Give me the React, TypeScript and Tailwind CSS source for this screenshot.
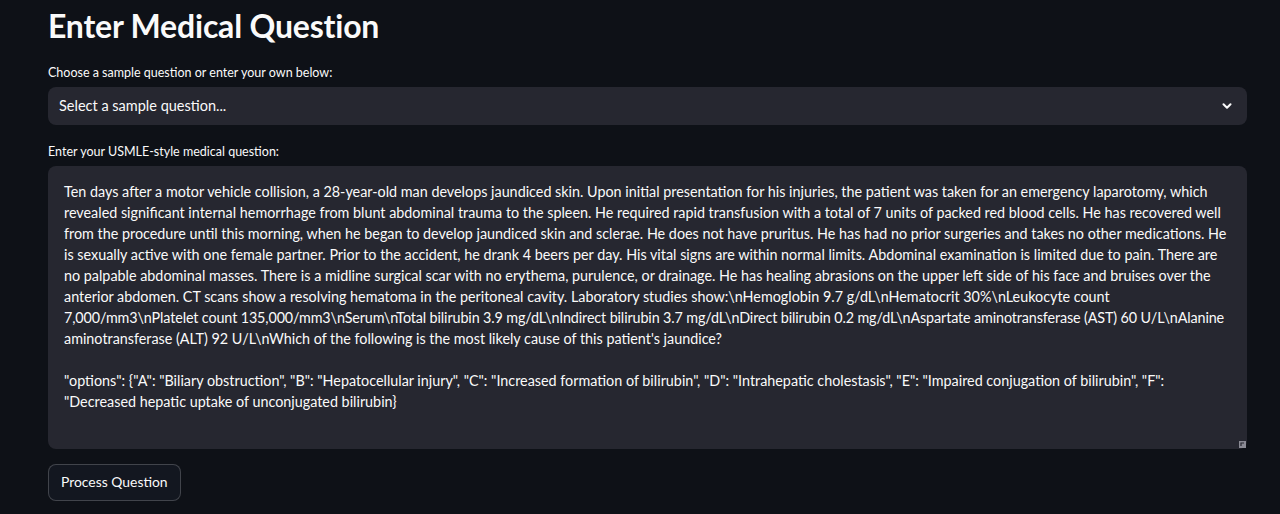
import React from "react";

const lines = [
  "Ten days after a motor vehicle collision, a 28-year-old man develops jaundiced skin. Upon initial presentation for his injuries, the patient was taken for an emergency laparotomy, which",
  "revealed significant internal hemorrhage from blunt abdominal trauma to the spleen. He required rapid transfusion with a total of 7 units of packed red blood cells. He has recovered well",
  "from the procedure until this morning, when he began to develop jaundiced skin and sclerae. He does not have pruritus. He has had no prior surgeries and takes no other medications. He",
  "is sexually active with one female partner. Prior to the accident, he drank 4 beers per day. His vital signs are within normal limits. Abdominal examination is limited due to pain. There are",
  "no palpable abdominal masses. There is a midline surgical scar with no erythema, purulence, or drainage. He has healing abrasions on the upper left side of his face and bruises over the",
  "anterior abdomen. CT scans show a resolving hematoma in the peritoneal cavity. Laboratory studies show:\\nHemoglobin 9.7 g/dL\\nHematocrit 30%\\nLeukocyte count",
  "7,000/mm3\\nPlatelet count 135,000/mm3\\nSerum\\nTotal bilirubin 3.9 mg/dL\\nIndirect bilirubin 3.7 mg/dL\\nDirect bilirubin 0.2 mg/dL\\nAspartate aminotransferase (AST) 60 U/L\\nAlanine",
  "aminotransferase (ALT) 92 U/L\\nWhich of the following is the most likely cause of this patient's jaundice?",
  "",
  "\"options\": {\"A\": \"Biliary obstruction\", \"B\": \"Hepatocellular injury\", \"C\": \"Increased formation of bilirubin\", \"D\": \"Intrahepatic cholestasis\", \"E\": \"Impaired conjugation of bilirubin\", \"F\":",
  "\"Decreased hepatic uptake of unconjugated bilirubin}",
];

export default function App() {
  return (
    <div
      className="w-[1280px] h-[514px] overflow-hidden bg-[#0e1117] text-[#fafafa]"
      style={{ fontFamily: "Lato, 'Liberation Sans', sans-serif" }}
    >
      <div className="pl-12 pr-[33px] pt-[4px]">
        <h1 className="text-[32px] font-bold leading-[44px] tracking-[-0.2px]">Enter Medical Question</h1>
        <div className="mt-[16px] text-[12.5px] leading-[18px]">Choose a sample question or enter your own below:</div>
        <div className="mt-[5px] h-[38px] rounded-lg bg-[#262730] flex items-center justify-between pl-[11px] pr-[13px]">
          <span className="text-[14.5px]">Select a sample question...</span>
          <svg width="14" height="14" viewBox="0 0 24 24" fill="none" stroke="#fafafa" strokeWidth="3.5" strokeLinecap="round" strokeLinejoin="round">
            <path d="M6 9l6 6 6-6" />
          </svg>
        </div>
        <div className="mt-[18px] text-[12.5px] leading-[18px]">Enter your USMLE-style medical question:</div>
        <div className="relative mt-[5px] h-[283px] rounded-lg bg-[#262730] pl-4 pr-4 pt-[15px]">
          {lines.map((l, i) => (
            <div
              key={i}
              className={
                i === 6
                  ? "whitespace-nowrap text-[14.35px] leading-[21px] h-[21px] tracking-[-0.12px]"
                  : "whitespace-nowrap text-[14.35px] leading-[21px] h-[21px]"
              }
            >
              {l}
            </div>
          ))}
          <svg className="absolute right-[1px] bottom-[1px]" width="7" height="7" viewBox="0 0 7 7">
            <rect x="0" y="0" width="7" height="7" fill="#8a8a94" />
            <path d="M2 5V2h3" stroke="#262730" strokeWidth="1.2" fill="none" />
          </svg>
        </div>
        <button className="mt-[15px] h-[37px] px-[12px] rounded-lg border border-[#fafafa33] bg-[#131720] text-[13.9px]">
          Process Question
        </button>
      </div>
    </div>
  );
}
